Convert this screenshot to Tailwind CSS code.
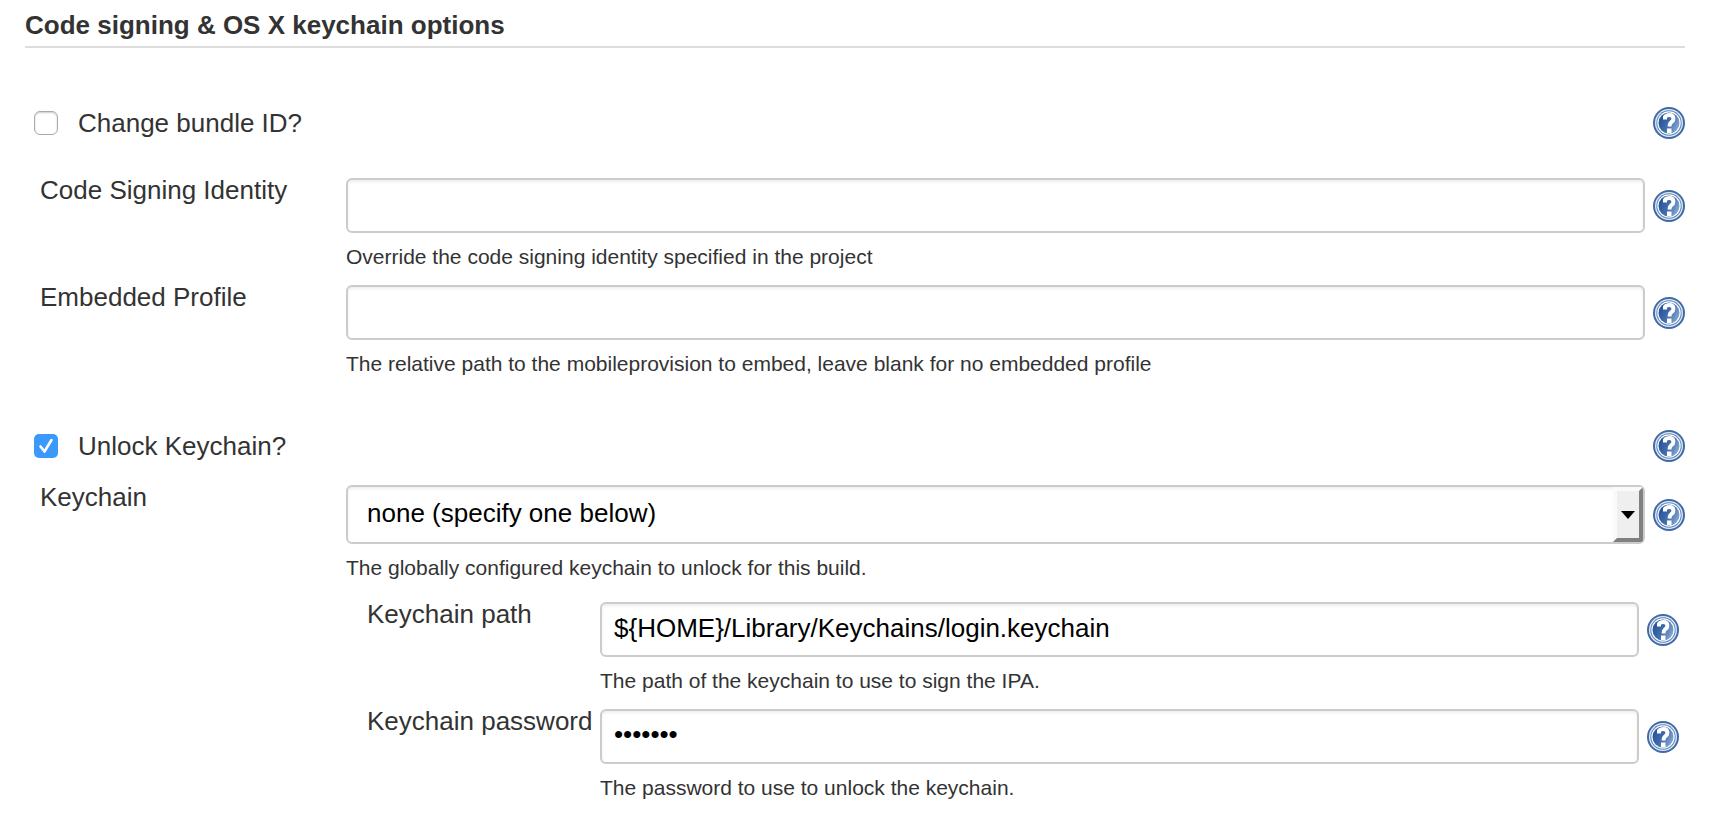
<!DOCTYPE html>
<html lang="en">
<head>
<meta charset="utf-8">
<meta name="viewport" content="width=device-width, initial-scale=1">
<title>Code signing options</title>
<script src="https://cdn.jsdelivr.net/npm/@tailwindcss/browser@4"></script>
</head>
<body class="bg-white font-['Helvetica_Neue','Liberation_Sans',sans-serif] text-[26px] leading-[30px] text-[#333]">
<svg class="absolute size-0" aria-hidden="true">
  <defs>
    <linearGradient id="face" x1="0" y1="0.3" x2="1" y2="0.8">
      <stop offset="0" stop-color="#24509a"/><stop offset="0.5" stop-color="#4470ac"/><stop offset="1" stop-color="#8fb0d8"/>
    </linearGradient>
    <symbol id="help" viewBox="0 0 32 32">
      <circle cx="16" cy="16" r="16" fill="#3f6aa8"/>
      <circle cx="16" cy="16" r="14" fill="#e3ebf5"/>
      <circle cx="16" cy="16" r="12.700" fill="#5d84ba"/>
      <circle cx="16" cy="16" r="11.700" fill="#fff"/>
      <circle cx="16" cy="16" r="10.500" fill="url(#face)"/>
      <path d="M12 12.500V10q1.400-2 4.400-2 4 0 4 3.800 0 2-2 3.400-1.900 1.400-1.900 4.300" fill="none" stroke="#fff" stroke-width="4"/>
      <rect x="14" y="21.500" width="4.500" height="4.500" fill="#fff"/>
    </symbol>
  </defs>
</svg>
<main class="pt-[10px] pr-[45px] pb-5 pl-[25px]">
  <h1 class="border-b-2 border-[#ddd] pb-[6px] font-bold">Code signing &amp; OS X keychain options</h1>

  <div class="mt-[59px] flex h-8 items-center pl-[9px]">
    <input id="bundle" type="checkbox" class="size-6 appearance-none rounded-[6px] border border-[#aaa] bg-white shadow-[inset_0_1px_2px_#ccc]">
    <label for="bundle" class="ml-5">Change bundle ID?</label>
    <button type="button" aria-label="Help for bundle ID" class="ml-auto size-8"><svg class="size-8"><use href="#help"/></svg></button>
  </div>

  <div class="mt-9 flex items-start">
    <label for="identity" class="w-[321px] shrink-0 pl-[15px]">Code Signing Identity</label>
    <div class="min-w-0 flex-1 pt-[3px] pb-[11px]">
      <input id="identity" type="text" class="block h-[55px] w-full rounded-[6px] border-2 border-[#ccc] px-3 pb-[2px] text-black shadow-[inset_0_2px_3px_#eee]">
      <p class="mt-[10px] text-[21px] leading-7">Override the code signing identity specified in the project</p>
    </div>
    <button type="button" aria-label="Help for code signing identity" class="mt-[15px] ml-2 size-8 shrink-0"><svg class="size-8"><use href="#help"/></svg></button>
  </div>

  <div class="flex items-start">
    <label for="profile" class="w-[321px] shrink-0 pl-[15px]">Embedded Profile</label>
    <div class="min-w-0 flex-1 pt-[3px] pb-[11px]">
      <input id="profile" type="text" class="block h-[55px] w-full rounded-[6px] border-2 border-[#ccc] px-3 pb-[2px] text-black shadow-[inset_0_2px_3px_#eee]">
      <p class="mt-[10px] text-[21px] leading-7">The relative path to the mobileprovision to embed, leave blank for no embedded profile</p>
    </div>
    <button type="button" aria-label="Help for embedded profile" class="mt-[15px] ml-2 size-8 shrink-0"><svg class="size-8"><use href="#help"/></svg></button>
  </div>

  <div class="mt-[41px] flex h-8 items-center pl-[9px]">
    <span class="grid size-6">
      <input id="unlock" type="checkbox" checked class="col-start-1 row-start-1 size-6 appearance-none rounded-[5px] bg-white checked:bg-[#3b99fc]">
      <svg class="pointer-events-none col-start-1 row-start-1 size-6" viewBox="0 0 24 24" fill="none" stroke="#fff" stroke-width="2.600" stroke-linecap="round" stroke-linejoin="round"><path d="M6.500 12.500l4 5L17.500 6"/></svg>
    </span>
    <label for="unlock" class="ml-5">Unlock Keychain?</label>
    <button type="button" aria-label="Help for unlocking the keychain" class="ml-auto size-8"><svg class="size-8"><use href="#help"/></svg></button>
  </div>

  <div class="mt-5 flex items-start">
    <label for="keychain" class="w-[321px] shrink-0 pl-[15px]">Keychain</label>
    <div class="min-w-0 flex-1 pt-[3px] pb-[11px]">
      <div class="grid">
        <select id="keychain" class="col-start-1 row-start-1 h-[59px] w-full appearance-none rounded-[6px] border-2 border-[#ccc] bg-white pr-9 pb-1 pl-[19px] text-black shadow-[inset_0_2px_3px_#eee]">
          <option>none (specify one below)</option>
        </select>
        <span class="pointer-events-none col-start-1 row-start-1 m-[2px] grid w-[30px] place-items-center justify-self-end rounded-r-[3px] border-4 border-t-[#fafafa] border-r-[#808080] border-b-[#808080] border-l-[#fafafa] bg-[#efefef]">
          <svg class="h-2 w-[14px]" viewBox="0 0 14 8"><path d="M0 0h14L7 8z" fill="#000"/></svg>
        </span>
      </div>
      <p class="mt-[10px] text-[21px] leading-7">The globally configured keychain to unlock for this build.</p>
    </div>
    <button type="button" aria-label="Help for keychain" class="mt-[17px] ml-2 size-8 shrink-0"><svg class="size-8"><use href="#help"/></svg></button>
  </div>

  <div class="mt-[6px] pr-[6px] pl-[342px]">
    <div class="flex items-start">
      <label for="path" class="w-[233px] shrink-0">Keychain path</label>
      <div class="min-w-0 flex-1 pt-[3px] pb-[11px]">
        <input id="path" type="text" value="${HOME}/Library/Keychains/login.keychain" class="block h-[55px] w-full rounded-[6px] border-2 border-[#ccc] px-3 pb-[2px] text-black shadow-[inset_0_2px_3px_#eee]">
        <p class="mt-[10px] text-[21px] leading-7">The path of the keychain to use to sign the IPA.</p>
      </div>
      <button type="button" aria-label="Help for keychain path" class="mt-[15px] ml-2 size-8 shrink-0"><svg class="size-8"><use href="#help"/></svg></button>
    </div>
    <div class="flex items-start">
      <label for="password" class="w-[233px] shrink-0">Keychain password</label>
      <div class="min-w-0 flex-1 pt-[3px] pb-[11px]">
        <input id="password" type="password" value="example" class="block h-[55px] w-full rounded-[6px] border-2 border-[#ccc] px-3 pb-1 text-black shadow-[inset_0_2px_3px_#eee]">
        <p class="mt-[10px] text-[21px] leading-7">The password to use to unlock the keychain.</p>
      </div>
      <button type="button" aria-label="Help for keychain password" class="mt-[15px] ml-2 size-8 shrink-0"><svg class="size-8"><use href="#help"/></svg></button>
    </div>
  </div>
</main>
</body>
</html>
